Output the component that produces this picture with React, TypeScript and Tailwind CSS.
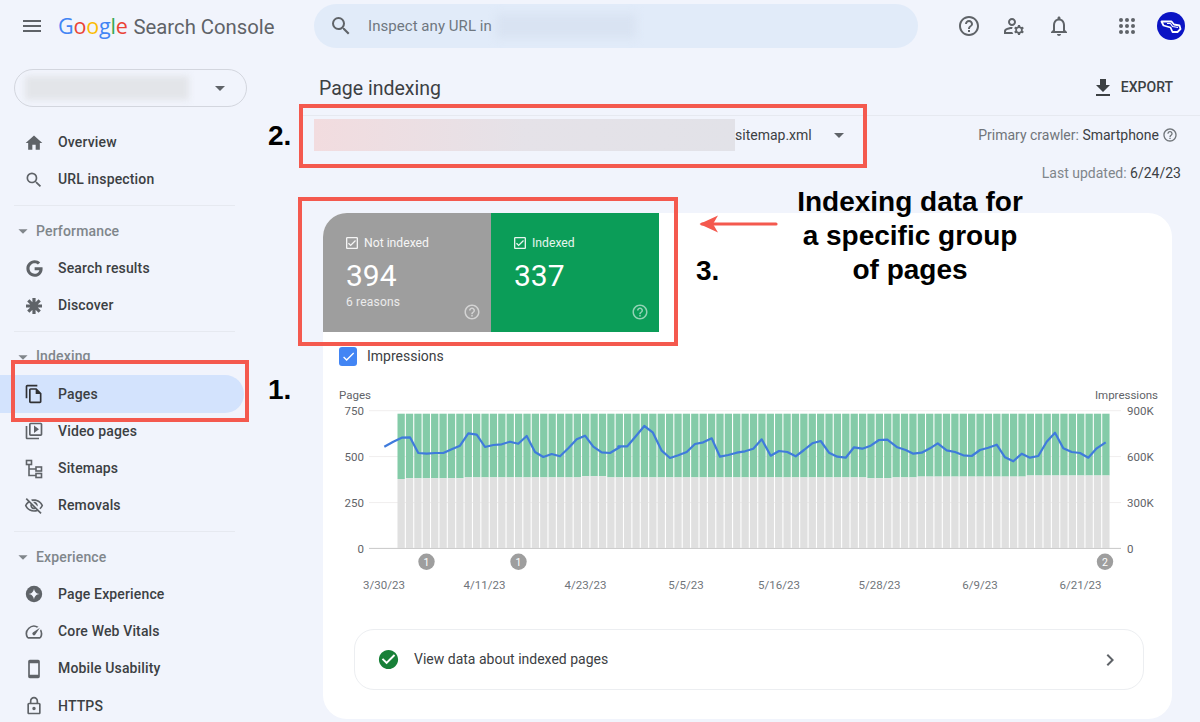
import React from "react";
import {
  MdMenu, MdHome, MdSearch, MdOutlineFileCopy, MdOutlineVideoLibrary, MdOutlineVisibilityOff,
  MdOutlineSpeed, MdOutlineSmartphone, MdOutlineLock, MdHelpOutline, MdOutlineManageAccounts,
  MdOutlineNotifications, MdFileDownload, MdArrowDropDown, MdOutlineCheckBox, MdCheckCircle,
  MdChevronRight, MdCheck,
} from "react-icons/md";
import { FaGoogle } from "react-icons/fa";

const SitemapIcon = () => (
  <svg width="20" height="20" viewBox="0 0 20 20" fill="none" stroke="#5f6368" strokeWidth="1.6">
    <rect x="2.5" y="1.5" width="5" height="4" />
    <rect x="12" y="8" width="5.5" height="4" />
    <rect x="12" y="14.5" width="5.5" height="4" />
    <path d="M5 5.5V16.5H12M5 10H12" />
  </svg>
);
const DiscoverIcon = () => (
  <svg width="18" height="18" viewBox="0 0 18 18" stroke="#5f6368" strokeWidth="3.2">
    <path d="M9 1V17M1 9H17M3.3 3.3 14.7 14.7M14.7 3.3 3.3 14.7" />
  </svg>
);
const PageExpIcon = () => (
  <svg width="20" height="20" viewBox="0 0 20 20">
    <circle cx="10" cy="10" r="8.2" fill="#5f6368" />
    <path d="M10 4.5C10.6 8 12 9.4 15.5 10 12 10.6 10.6 12 10 15.5 9.4 12 8 10.6 4.5 10 8 9.4 9.4 8 10 4.5Z" fill="#f1f4fc" />
  </svg>
);
const AppsIcon = () => (
  <svg width="18" height="18" viewBox="0 0 18 18" fill="#5f6368">
    {[3, 9, 15].flatMap((y) => [3, 9, 15].map((x) => <circle key={x + "-" + y} cx={x} cy={y} r="2" />))}
  </svg>
);
const Avatar = () => (
  <div className="flex h-[28px] w-[28px] items-center justify-center rounded-full bg-[#0b14c4]">
    <svg width="24" height="24" viewBox="0 0 24 24" fill="none" stroke="#fff" strokeWidth="1.8" strokeLinejoin="round">
      <path d="M2.5 7.5H12.5L15 10.5 20.5 11.5 21.5 15 18.5 18H13.5L11.5 13.5 4.5 11.5Z" />
      <path d="M8 9.5H11.5L13.5 12.5 19 13.5" strokeWidth="1.2" />
    </svg>
  </div>
);

type Item = { label: string; icon: React.ReactNode; active?: boolean };
const I = "text-[#5f6368]";
const Row = ({ label, icon, active }: Item) => (
  <div className={"flex h-[37.3px] w-[244px] items-center rounded-r-full " + (active ? "bg-[#d3e3fd]" : "")}>
    <span className="flex w-[58px] shrink-0 justify-center pl-[10px] pr-0">
      <span className="flex w-[20px] justify-center">{icon}</span>
    </span>
    <span className="text-[14px] font-medium tracking-[0.15px] text-[#3c4043]">{label}</span>
  </div>
);
const Divider = () => (
  <div className="flex h-[13.8px] items-center pl-[14px]">
    <div className="h-px w-[221px] bg-[#e6e9f0]" />
  </div>
);
const Section = ({ label }: { label: string }) => (
  <div className="flex h-[37.3px] items-center">
    <MdArrowDropDown size={22} className="ml-[12px] text-[#80868b]" />
    <span className="ml-[2px] text-[14px] font-medium tracking-[0.15px] text-[#80868b]">{label}</span>
  </div>
);

const BAR_COUNT = 85;
const bx = (i: number) => 397.5 + i * 8.39;
const grayTop = (i: number) => {
  if (i === 0) return 479;
  if (i < 8) return 478.3;
  if (i >= 22 && i < 25) return 476.3;
  if (i >= 56 && i < 59) return 478.3;
  if (i >= 62 && i < 75) return 476.6;
  if (i >= 75) return 475.5;
  return 477.4;
};
const z1: [number, number][] = [[163,200],[190,185],[215,173],[240,172],[265,219],[290,221],[315,219],[340,219],[365,208],[390,197],[415,160],[440,164],[465,201],[490,195],[515,193],[540,185],[565,191],[590,168],[615,216],[640,231],[665,222],[690,229],[715,205],[740,178],[765,167],[790,200],[815,217],[840,219]];
const z2: [number, number][] = [[25,139],[52,139],[78,108],[103,78],[128,97],[155,152],[180,174],[205,166],[230,156],[255,132],[280,127],[305,115],[330,170],[355,165],[380,158],[405,154],[430,146],[455,118],[482,167],[507,153],[532,156],[557,169],[582,150],[607,130],[632,123],[657,158],[682,170],[707,173],[732,142],[757,146],[782,137],[807,120],[832,119],[862,142],[887,150]];
const z3: [number, number][] = [[40,221],[65,218],[90,205],[113,190],[140,211],[165,216],[190,226],[215,228],[240,210],[265,203],[290,194],[315,232],[340,244],[365,221],[390,233],[415,228],[440,185],[465,158],[490,205],[515,216],[540,219],[565,233],[590,205],[617,187]];
const linePts = [
  ...z1.map(([x, y]) => [330 + x / 3, 380 + y / 3]),
  [620, 447],
  ...z2.map(([x, y]) => [610 + x / 3, 400 + y / 3]),
  ...z3.map(([x, y]) => [900 + x / 3, 380 + y / 3]),
].map(([x, y]) => x.toFixed(1) + "," + y.toFixed(1)).join(" ");

const dates: [string, number][] = [["3/30/23",384],["4/11/23",484.5],["4/23/23",585.5],["5/5/23",686],["5/16/23",779],["5/28/23",879.5],["6/9/23",980],["6/21/23",1080.5]];
const leftTicks: [string, number][] = [["750",410.7],["500",456.6],["250",502.6],["0",548.4]];
const rightTicks: [string, number][] = [["900K",410.7],["600K",456.6],["300K",502.6],["0",548.4]];

const Chart = () => (
  <svg width="849" height="215" viewBox="323 385 849 215" className="block [font-family:Roboto,sans-serif]">
    {leftTicks.map(([, y], i) => (
      <line key={i} x1="369" x2="1121" y1={y} y2={y} stroke={i === 3 ? "#c8c8c8" : "#f0eeee"} strokeWidth="1" />
    ))}
    {Array.from({ length: BAR_COUNT }, (_, i) => (
      <g key={i}>
        <rect x={bx(i)} y={413.7} width={7.3} height={grayTop(i) - 413.7} fill="#84cba8" />
        <rect x={bx(i)} y={grayTop(i)} width={7.3} height={548 - grayTop(i)} fill="#e0e0e0" />
      </g>
    ))}
    <polyline points={linePts} fill="none" stroke="#3f7bdc" strokeWidth="2.2" strokeLinejoin="round" />
    <text x="339" y="399" fontSize="11.5" fill="#5f6368">Pages</text>
    <text x="1158" y="399" fontSize="11.5" fill="#5f6368" textAnchor="end">Impressions</text>
    {leftTicks.map(([t, y]) => (
      <text key={t} x="364" y={y + 4.5} fontSize="11.5" fill="#5f6368" textAnchor="end">{t}</text>
    ))}
    {rightTicks.map(([t, y]) => (
      <text key={t} x="1127" y={y + 4.5} fontSize="11.5" fill="#5f6368">{t}</text>
    ))}
    {([[426.5,"1"],[518.5,"1"],[1105,"2"]] as [number,string][]).map(([x, t], i) => (
      <g key={i}>
        <circle cx={x} cy="561.8" r="8.2" fill="#9e9e9e" />
        <text x={x} y="565.5" fontSize="10.5" fill="#fff" textAnchor="middle">{t}</text>
      </g>
    ))}
    {dates.map(([t, x]) => (
      <text key={t} x={x} y="589" fontSize="11.5" fill="#70757a" textAnchor="middle">{t}</text>
    ))}
  </svg>
);

const Tile = ({ label, value, sub, bg, round }: { label: string; value: string; sub?: string; bg: string; round?: boolean }) => (
  <div className={"relative h-[119px] w-[168px] pl-[23px] pt-[21px] text-white " + bg + (round ? " rounded-tl-[24px]" : "")}>
    <div className="flex h-[18px] items-center text-[12.2px] text-white/90">
      <MdOutlineCheckBox size={16} className="-ml-[2px] mr-[4px]" />
      <span>{label}</span>
    </div>
    <div className="mt-[6px] text-[30px] leading-[36px]">{value}</div>
    {sub && <div className="-mt-[1px] text-[12px] tracking-[0.2px] text-white/80">{sub}</div>}
    <MdHelpOutline size={18} className="absolute bottom-[11px] right-[10px] text-white/55" />
  </div>
);

const RedBox = ({ className }: { className: string }) => (
  <div className={"pointer-events-none absolute border-[4px] border-[#f4594e] " + className} />
);
const Note = ({ children, className }: { children: React.ReactNode; className: string }) => (
  <div className={"absolute font-bold text-black [font-family:'Liberation_Sans',Arial,sans-serif] " + className}>{children}</div>
);

export default function App() {
  return (
    <div className="relative flex h-[722px] w-full flex-col overflow-hidden bg-[#f1f4fc] [font-family:Roboto,sans-serif]">
      <header className="flex h-[52px] shrink-0 items-center">
        <MdMenu size={24} className="ml-[20px] text-[#5f6368]" />
        <div className="ml-[14px] flex w-[256px] items-baseline whitespace-nowrap text-[21.5px] leading-none">
          <span className="tracking-[-0.2px] [font-family:'Open_Sans',sans-serif]">
            <span className="text-[#4285f4]">G</span>
            <span className="text-[#ea4335]">o</span>
            <span className="text-[#fbbc05]">o</span>
            <span className="text-[#4285f4]">g</span>
            <span className="text-[#34a853]">l</span>
            <span className="text-[#ea4335]">e</span>
          </span>
          <span className="ml-[6px] text-[20.3px] text-[#5f6368]">Search Console</span>
        </div>
        <div className="flex h-[44px] w-[604px] items-center rounded-[22px] bg-[#e1ebf9]">
          <MdSearch size={24} className="ml-[15px] text-[#5f6368]" />
          <span className="ml-[15px] text-[15px] tracking-[0.05px] text-[#6f7780]">Inspect any URL in</span>
          <div className="ml-[4px] h-[24px] w-[140px] bg-[#d9e3f2] blur-[4px]" />
        </div>
        <div className="ml-[39px] flex items-center">
          <MdHelpOutline size={24} className="text-[#5f6368]" />
          <MdOutlineManageAccounts size={24} className="ml-[21px] text-[#5f6368]" />
          <MdOutlineNotifications size={24} className="ml-[21px] text-[#5f6368]" />
          <span className="ml-[47px]"><AppsIcon /></span>
          <span className="ml-[21px]"><Avatar /></span>
        </div>
      </header>

      <div className="flex min-h-0 flex-1">
        <aside className="w-[299px] shrink-0 pt-[17px]">
          <div className="ml-[14px] flex h-[38px] w-[233px] items-center rounded-full border border-[#d3d6de]">
            <div className="ml-[10px] h-[24px] w-[164px] bg-[#e3e5e9] blur-[3px]" />
            <MdArrowDropDown size={24} className="ml-[19px] text-[#5f6368]" />
          </div>
          <nav className="mt-[17px]">
            <Row label="Overview" icon={<MdHome size={20} className={I} />} />
            <Row label="URL inspection" icon={<MdSearch size={20} className={I} />} />
            <Divider />
            <Section label="Performance" />
            <Row label="Search results" icon={<FaGoogle size={17} className={I} />} />
            <Row label="Discover" icon={<DiscoverIcon />} />
            <Divider />
            <Section label="Indexing" />
            <Row active label="Pages" icon={<MdOutlineFileCopy size={20} className="text-[#303134]" />} />
            <Row label="Video pages" icon={<MdOutlineVideoLibrary size={20} className={I} />} />
            <Row label="Sitemaps" icon={<SitemapIcon />} />
            <Row label="Removals" icon={<MdOutlineVisibilityOff size={20} className={I} />} />
            <Divider />
            <Section label="Experience" />
            <Row label="Page Experience" icon={<PageExpIcon />} />
            <Row label="Core Web Vitals" icon={<MdOutlineSpeed size={20} className={I} />} />
            <Row label="Mobile Usability" icon={<MdOutlineSmartphone size={20} className={I} />} />
            <Row label="HTTPS" icon={<MdOutlineLock size={20} className={I} />} />
          </nav>
        </aside>

        <main className="flex min-w-0 flex-1 flex-col">
          <div className="flex h-[64px] shrink-0 items-center justify-between border-b border-[#e6e9f0] pl-[20px] pr-[27px] pt-[8px]">
            <h1 className="mt-[2px] text-[19.5px] font-normal text-[#3c4043]">Page indexing</h1>
            <div className="flex items-center">
              <MdFileDownload size={24} className="text-[#3c4043]" />
              <span className="ml-[6px] text-[14px] font-medium text-[#3c4043]">EXPORT</span>
            </div>
          </div>
          <div className="flex h-[37px] shrink-0 items-center pl-[15px] pr-[22px] pt-[1px]">
            <div className="h-[32px] w-[421px] bg-gradient-to-r from-[#f2dcdf] via-[#e5e2e8] to-[#e2e2e8]" />
            <span className="text-[14px] text-[#3c4043]">sitemap.xml</span>
            <MdArrowDropDown size={24} className="ml-[15px] text-[#5f6368]" />
            <div className="ml-auto flex items-center text-[14px]">
              <span className="text-[#70757a]">Primary crawler:&nbsp;</span>
              <span className="text-[#3c4043]">Smartphone</span>
              <MdHelpOutline size={16} className="ml-[3px] text-[#70757a]" />
            </div>
          </div>
          <div className="mb-[19px] flex h-[41px] shrink-0 items-center justify-end pr-[19px] text-[14px]">
            <span className="text-[#80868b]">Last updated:&nbsp;</span>
            <span className="text-[#3c4043]">6/24/23</span>
          </div>
          <section className="mb-[3px] ml-[24px] w-[849px] flex-1 rounded-[24px] bg-white">
            <div className="flex">
              <Tile round label="Not indexed" value="394" sub="6 reasons" bg="bg-[#9e9e9e]" />
              <Tile label="Indexed" value="337" bg="bg-[#0b9d58]" />
            </div>
            <div className="ml-[16px] mt-[15px] flex h-[19px] items-center">
              <span className="flex h-[19px] w-[18px] items-center justify-center rounded-[3px] bg-[#4285f4]">
                <MdCheck size={15} className="text-white" />
              </span>
              <span className="ml-[10px] text-[14px] text-[#3c4043]">Impressions</span>
            </div>
            <div className="mt-[19px]"><Chart /></div>
            <div className="ml-[31px] mt-[29px] flex h-[61px] w-[790px] items-center rounded-[20px] border border-[#eceef1]">
              <MdCheckCircle size={23} className="ml-[22px] text-[#188038]" />
              <span className="ml-[14px] text-[14px] text-[#3c4043]">View data about indexed pages</span>
              <MdChevronRight size={24} className="ml-auto mr-[21px] text-[#5f6368]" />
            </div>
          </section>
        </main>
      </div>

      <RedBox className="left-[11px] top-[360px] h-[62px] w-[238px]" />
      <RedBox className="left-[299px] top-[104px] h-[64px] w-[568px]" />
      <RedBox className="left-[298px] top-[197px] h-[149px] w-[380px]" />
      <Note className="left-[268px] top-[375px] text-[28px] leading-[30px]">1.</Note>
      <Note className="left-[268px] top-[121px] text-[28px] leading-[30px]">2.</Note>
      <Note className="left-[696px] top-[256px] text-[28px] leading-[30px]">3.</Note>
      <Note className="left-[770px] top-[185px] w-[280px] text-center text-[28px] leading-[34px]">
        Indexing data for<br />a specific group<br />of pages
      </Note>
      <svg className="absolute left-[698px] top-[214px]" width="82" height="20" viewBox="0 0 82 20">
        <path d="M4 10H78" stroke="#f4594e" strokeWidth="3.2" strokeLinecap="round" />
        <path d="M1.5 10 20 1.5 15 10 20 18.5Z" fill="#f4594e" />
      </svg>
    </div>
  );
}
